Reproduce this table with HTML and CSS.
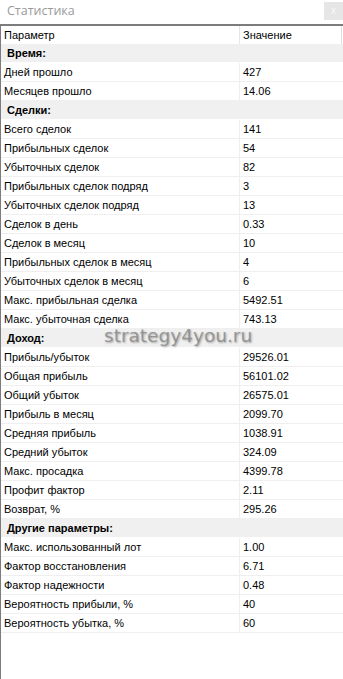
FILE: index.html
```html
<!DOCTYPE html>
<html lang="ru">
<head>
<meta charset="utf-8">
<title>Статистика</title>
<link rel="stylesheet" href="styles.css">
</head>
<body>
<div class="window">
  <div class="titlebar">
    <span class="title">Статистика</span>
    <span class="close">x</span>
  </div>
  <div class="panel">
    <div class="row head"><div class="c1">Параметр</div><div class="c2">Значение</div></div>
    <div class="row group"><div class="g">Время:</div></div>
    <div class="row"><div class="c1">Дней прошло</div><div class="c2">427</div></div>
    <div class="row"><div class="c1">Месяцев прошло</div><div class="c2">14.06</div></div>
    <div class="row group"><div class="g">Сделки:</div></div>
    <div class="row"><div class="c1">Всего сделок</div><div class="c2">141</div></div>
    <div class="row"><div class="c1">Прибыльных сделок</div><div class="c2">54</div></div>
    <div class="row"><div class="c1">Убыточных сделок</div><div class="c2">82</div></div>
    <div class="row"><div class="c1">Прибыльных сделок подряд</div><div class="c2">3</div></div>
    <div class="row"><div class="c1">Убыточных сделок подряд</div><div class="c2">13</div></div>
    <div class="row"><div class="c1">Сделок в день</div><div class="c2">0.33</div></div>
    <div class="row"><div class="c1">Сделок в месяц</div><div class="c2">10</div></div>
    <div class="row"><div class="c1">Прибыльных сделок в месяц</div><div class="c2">4</div></div>
    <div class="row"><div class="c1">Убыточных сделок в месяц</div><div class="c2">6</div></div>
    <div class="row"><div class="c1">Макс. прибыльная сделка</div><div class="c2">5492.51</div></div>
    <div class="row"><div class="c1">Макс. убыточная сделка</div><div class="c2">743.13</div></div>
    <div class="row group"><div class="g">Доход:</div></div>
    <div class="row"><div class="c1">Прибыль/убыток</div><div class="c2">29526.01</div></div>
    <div class="row"><div class="c1">Общая прибыль</div><div class="c2">56101.02</div></div>
    <div class="row"><div class="c1">Общий убыток</div><div class="c2">26575.01</div></div>
    <div class="row"><div class="c1">Прибыль в месяц</div><div class="c2">2099.70</div></div>
    <div class="row"><div class="c1">Средняя прибыль</div><div class="c2">1038.91</div></div>
    <div class="row"><div class="c1">Средний убыток</div><div class="c2">324.09</div></div>
    <div class="row"><div class="c1">Макс. просадка</div><div class="c2">4399.78</div></div>
    <div class="row"><div class="c1">Профит фактор</div><div class="c2">2.11</div></div>
    <div class="row"><div class="c1">Возврат, %</div><div class="c2">295.26</div></div>
    <div class="row group"><div class="g">Другие параметры:</div></div>
    <div class="row"><div class="c1">Макс. использованный лот</div><div class="c2">1.00</div></div>
    <div class="row"><div class="c1">Фактор восстановления</div><div class="c2">6.71</div></div>
    <div class="row"><div class="c1">Фактор надежности</div><div class="c2">0.48</div></div>
    <div class="row"><div class="c1">Вероятность прибыли, %</div><div class="c2">40</div></div>
    <div class="row"><div class="c1">Вероятность убытка, %</div><div class="c2">60</div></div>
    <div class="watermark">strategy4you.ru</div>
  </div>
</div>
</body>
</html>
```
FILE: styles.css
```css
html, body {
  margin: 0;
  padding: 0;
  background: #ffffff;
}
body {
  width: 343px;
  height: 679px;
  overflow: hidden;
  font-family: "Liberation Sans", Arial, sans-serif;
  font-size: 11px;
  color: #000;
}
.window {
  display: flex;
  flex-direction: column;
  height: 679px;
}
.titlebar {
  height: 24px;
  display: flex;
  align-items: flex-start;
  justify-content: space-between;
  border-bottom: 2px solid #7c7c7c;
}
.title {
  font-family: "Open Sans", "Liberation Sans", sans-serif;
  font-size: 12.5px;
  color: #9a9a9a;
  padding: 2px 0 0 7px;
}
.close {
  width: 19px;
  height: 18px;
  margin-top: 2px;
  background: #e6e6e6;
  color: #f8f8f8;
  font-size: 10px;
  line-height: 18px;
  text-align: center;
}
.panel {
  position: relative;
  flex: 1;
  border-left: 1px solid #7c7c7c;
}
.row {
  display: grid;
  grid-template-columns: 239px 1fr;
  height: 18px;
  border-bottom: 1px solid #efefef;
  line-height: 18px;
}
.c1 {
  padding-left: 3px;
  border-right: 1px solid #efefef;
  white-space: nowrap;
}
.c2 {
  padding-left: 3px;
  white-space: nowrap;
}
.head {
  border-bottom: none;
  margin-right: 1px;
  border-right: 1px solid #e0e0e0;
}
.head .c1 {
  border-right: 1px solid #e6e6e6;
}
.group {
  display: block;
  background: #f0f0f0;
  border-bottom: 1px solid #ffffff;
}
.g {
  padding-left: 6px;
  font-weight: bold;
}
.watermark {
  position: absolute;
  left: 103px;
  top: 299px;
  font-family: "DejaVu Sans", Verdana, sans-serif;
  font-size: 18.5px;
  color: rgba(130, 130, 130, 0.75);
  text-shadow: 1px 1px 2px rgba(150, 150, 150, 0.8);
  pointer-events: none;
}
```
